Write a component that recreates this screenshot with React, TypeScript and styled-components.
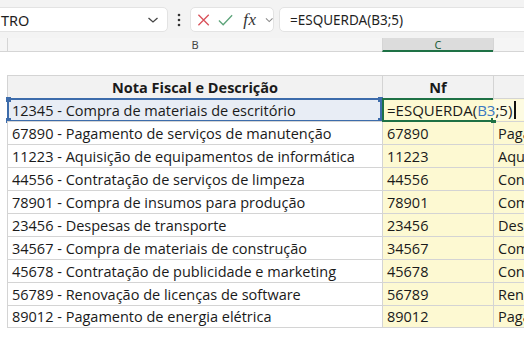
import React from 'react';
import styled, { createGlobalStyle } from 'styled-components';

const GlobalStyle = createGlobalStyle`
  html, body {
    margin: 0;
    padding: 0;
    background: #ffffff;
    overflow: hidden;
  }
  body {
    width: 524px;
    height: 339px;
    font-family: 'Open Sans', 'Liberation Sans', sans-serif;
  }
`;

const Page = styled.div`
  width: 524px;
  height: 339px;
  overflow: hidden;
  display: flex;
  flex-direction: column;
`;

const TopBar = styled.div`
  height: 38px;
  flex: none;
  box-sizing: border-box;
  padding-top: 7px;
  background: #f3f3f3;
  display: flex;
  align-items: flex-start;
`;

const NameBox = styled.div`
  width: 174px;
  height: 25px;
  margin-left: -6px;
  box-sizing: border-box;
  background: #ffffff;
  border: 1px solid #e3e3e3;
  border-radius: 5px;
  display: flex;
  align-items: center;
  justify-content: space-between;
  padding: 0 8px 0 6px;
  font-family: 'Noto Sans', sans-serif;
  font-size: 14.5px;
  color: #1f1f1f;
`;

const Dots = styled.div`
  width: 22px;
  height: 25px;
  display: flex;
  align-items: center;
  justify-content: center;
`;

const FuncBox = styled.div`
  width: 84px;
  height: 25px;
  box-sizing: border-box;
  background: #ffffff;
  border: 1px solid #e3e3e3;
  border-radius: 5px;
  display: flex;
  align-items: center;
  gap: 8px;
  padding-left: 6px;
`;

const Fx = styled.span`
  font-family: 'Liberation Serif', serif;
  font-style: italic;
  font-size: 17px;
  color: #333333;
  margin-left: 2px;
  letter-spacing: 0.5px;
`;

const FormulaInput = styled.div`
  flex: 1;
  height: 25px;
  margin-left: 5px;
  margin-right: -8px;
  box-sizing: border-box;
  background: #ffffff;
  border: 1px solid #e3e3e3;
  border-radius: 5px;
  display: flex;
  align-items: center;
  padding-left: 10px;
  font-family: 'Noto Sans', sans-serif;
  font-size: 13.5px;
  color: #1f1f1f;
`;

const Sheet = styled.div`
  display: grid;
  grid-template-columns: 7px 375px 111px 1fr;
  grid-auto-rows: 23px;
  grid-template-rows: 14px 23px;
`;

const Corner = styled.div`
  background: #f5f5f5;
  border-bottom: 1px solid #d5d5d5;
`;

const ColHead = styled.div<{ $active?: boolean }>`
  background: ${({ $active }) => ($active ? '#dcdcdc' : '#f5f5f5')};
  border-bottom: ${({ $active }) => ($active ? '2px solid #1e7145' : '1px solid #d5d5d5')};
  border-left: 1px solid #d5d5d5;
  box-sizing: border-box;
  display: flex;
  align-items: center;
  justify-content: center;
  font-family: 'Noto Sans', sans-serif;
  font-size: 11px;
  line-height: 1;
  color: ${({ $active }) => ($active ? '#1e5e3a' : '#444444')};
`;

const Blank = styled.div``;

type CellTone = 'plain' | 'head' | 'yellow' | 'selected';

const toneBg: Record<CellTone, string> = {
  plain: '#ffffff',
  head: '#f2f2f2',
  yellow: '#fdf9d2',
  selected: '#e8edf5',
};

const Cell = styled.div<{ $tone: CellTone; $bold?: boolean; $center?: boolean; $last?: boolean; $editing?: boolean }>`
  position: relative;
  z-index: ${({ $editing }) => ($editing ? 2 : 'auto')};
  background: ${({ $tone }) => toneBg[$tone]};
  border-left: 1px solid #d4d4d4;
  border-top: 1px solid #d4d4d4;
  border-bottom: ${({ $last }) => ($last ? '1px solid #d4d4d4' : 'none')};
  box-sizing: border-box;
  display: flex;
  align-items: center;
  justify-content: ${({ $center }) => ($center ? 'center' : 'flex-start')};
  padding-left: ${({ $center }) => ($center ? '0' : '4px')};
  font-family: 'Open Sans', sans-serif;
  font-size: 14.5px;
  font-weight: ${({ $bold }) => ($bold ? 700 : 400)};
  color: #1a1a1a;
  white-space: nowrap;
  overflow: visible;
`;

const ClipCell = styled(Cell)`
  overflow: hidden;
`;

const RangeFrame = styled.div<{ $color: string; $open?: boolean }>`
  position: absolute;
  inset: -1px 0 -1px -1px;
  border: 2px solid ${({ $color }) => $color};
  border-right: ${({ $open, $color }) => ($open ? 'none' : `2px solid ${$color}`)};
  pointer-events: none;
`;

const Handle = styled.span<{ $color: string; $x: 'left' | 'right'; $y: 'top' | 'bottom' }>`
  position: absolute;
  width: 5px;
  height: 5px;
  background: ${({ $color }) => $color};
  ${({ $x }) => ($x === 'left' ? 'left: -3px;' : 'right: -3px;')}
  ${({ $y }) => ($y === 'top' ? 'top: -3px;' : 'bottom: -3px;')}
`;

const EditText = styled.span`
  position: relative;
  z-index: 3;
  display: flex;
  align-items: center;
  padding-right: 12px;
  font-size: 15px;
  background: linear-gradient(to right, transparent 106px, #fdfbe2 106px);
`;

const Ref = styled.span`
  color: #3b78c2;
`;

const Caret = styled.span`
  display: inline-block;
  width: 1.5px;
  height: 18px;
  margin-left: 2px;
  background: #111111;
`;

const rows = [
  ['12345', 'Compra de materiais de escritório'],
  ['67890', 'Pagamento de serviços de manutenção'],
  ['11223', 'Aquisição de equipamentos de informática'],
  ['44556', 'Contratação de serviços de limpeza'],
  ['78901', 'Compra de insumos para produção'],
  ['23456', 'Despesas de transporte'],
  ['34567', 'Compra de materiais de construção'],
  ['45678', 'Contratação de publicidade e marketing'],
  ['56789', 'Renovação de licenças de software'],
  ['89012', 'Pagamento de energia elétrica'],
];

const BLUE = '#3d6cab';
const GREEN = '#1e7145';

const App: React.FC = () => {
  return (
    <Page>
      <GlobalStyle />
      <TopBar>
        <NameBox>
          <span>TRO</span>
          <svg width="12" height="8" viewBox="0 0 12 8">
            <path d="M1.5 2 L6 6 L10.5 2" fill="none" stroke="#444" strokeWidth="1.3" />
          </svg>
        </NameBox>
        <Dots>
          <svg width="4" height="14" viewBox="0 0 4 14">
            <circle cx="2" cy="2" r="1.3" fill="#333" />
            <circle cx="2" cy="7" r="1.3" fill="#333" />
            <circle cx="2" cy="12" r="1.3" fill="#333" />
          </svg>
        </Dots>
        <FuncBox>
          <svg width="14" height="14" viewBox="0 0 14 14">
            <path d="M1.5 1.5 L12.5 12.5 M12.5 1.5 L1.5 12.5" stroke="#d9515a" strokeWidth="1.4" fill="none" />
          </svg>
          <svg width="16" height="14" viewBox="0 0 16 14">
            <path d="M1 7.5 L5.5 12 L15 2" stroke="#5da47a" strokeWidth="1.4" fill="none" />
          </svg>
          <Fx>fx</Fx>
          <svg width="9" height="6" viewBox="0 0 9 6">
            <path d="M1 1.2 L4.5 4.6 L8 1.2" fill="none" stroke="#888" strokeWidth="1.1" />
          </svg>
        </FuncBox>
        <FormulaInput>=ESQUERDA(B3;5)</FormulaInput>
      </TopBar>

      <Sheet>
        <Corner />
        <ColHead>B</ColHead>
        <ColHead $active>C</ColHead>
        <ColHead />

        <Blank />
        <Blank />
        <Blank />
        <Blank />

        <Blank />
        <Cell $tone="head" $bold $center>Nota Fiscal e Descrição</Cell>
        <Cell $tone="head" $bold $center>Nf</Cell>
        <ClipCell $tone="head" />

        {rows.map(([nf, desc], i) => {
          const first = i === 0;
          const last = i === rows.length - 1;
          return (
            <React.Fragment key={nf}>
              <Blank />
              <Cell $tone={first ? 'selected' : 'plain'} $last={last}>
                {nf} - {desc}
                {first && (
                  <RangeFrame $color={BLUE}>
                    <Handle $color={BLUE} $x="left" $y="top" />
                    <Handle $color={BLUE} $x="left" $y="bottom" />
                    <Handle $color={BLUE} $x="right" $y="top" />
                    <Handle $color={BLUE} $x="right" $y="bottom" />
                  </RangeFrame>
                )}
              </Cell>
              <Cell $tone="yellow" $last={last} $editing={first}>
                {first ? (
                  <>
                    <RangeFrame $color={GREEN} $open>
                      <Handle $color={GREEN} $x="right" $y="bottom" />
                    </RangeFrame>
                    <EditText>
                      =ESQUERDA(<Ref>B3</Ref>;5)<Caret />
                    </EditText>
                  </>
                ) : (
                  nf
                )}
              </Cell>
              <ClipCell $tone="yellow" $last={last}>
                {first ? '' : desc}
              </ClipCell>
            </React.Fragment>
          );
        })}
      </Sheet>
    </Page>
  );
};

export default App;
